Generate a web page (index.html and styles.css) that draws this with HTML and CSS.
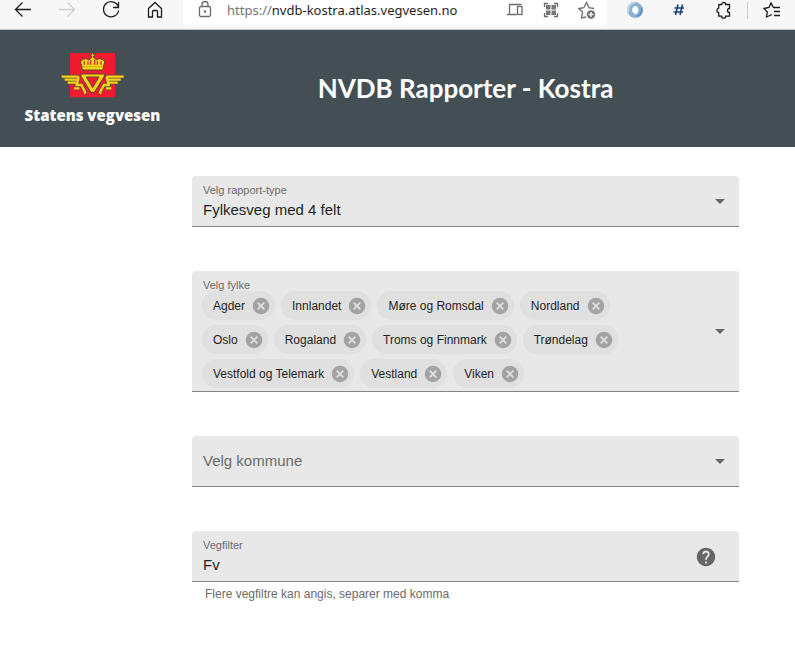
FILE: index.html
```html
<!DOCTYPE html>
<html lang="no">
<head>
<meta charset="utf-8">
<meta name="viewport" content="width=device-width, initial-scale=1">
<title>NVDB Rapporter - Kostra</title>
<link rel="stylesheet" href="styles.css">
</head>
<body>
<svg class="sprite" aria-hidden="true">
  <symbol id="remove" viewBox="0 0 18 18">
    <circle cx="9" cy="9" r="8.3" fill="#a3a3a3"/>
    <path d="M5.7 5.7l6.6 6.6M12.3 5.7l-6.6 6.6" stroke="#e0e0e0" stroke-width="1.8"/>
  </symbol>
</svg>

<div class="toolbar">
  <button class="tool" type="button" aria-label="Tilbake">
    <svg width="20" height="20" viewBox="0 0 20 20"><path d="M18 9.5H2.5M9.5 2.5l-7 7 7 7"/></svg>
  </button>
  <button class="tool faded" type="button" aria-label="Frem">
    <svg width="20" height="20" viewBox="0 0 20 20"><path d="M2 9.5h15.5M10.500 2.500l7 7-7 7"/></svg>
  </button>
  <button class="tool" type="button" aria-label="Oppdater">
    <svg width="20" height="20" viewBox="0 0 20 20"><path d="M17.500 7.500A7.600 7.600 0 1 0 17.600 10.500M17.500 2v5.500H12"/></svg>
  </button>
  <button class="tool" type="button" aria-label="Hjem">
    <svg width="20" height="20" viewBox="0 0 20 20"><path d="M3.500 8.500L10 2.500l6.500 6v8.500h-4v-5.500q0-1-1-1h-3q-1 0-1 1V17h-4z"/></svg>
  </button>
  <div class="address">
    <button class="tool grey" type="button" aria-label="Sikker tilkobling">
      <svg width="20" height="20" viewBox="0 0 20 20"><rect x="4.500" y="6.500" width="11" height="10" rx="1.500"/><path d="M7 6.500V4.500a3 3 0 0 1 6 0v2"/><circle cx="10" cy="11.500" r=".6"/></svg>
    </button>
    <label class="scheme" for="url">https://</label>
    <input class="url" id="url" type="text" value="nvdb-kostra.atlas.vegvesen.no">
    <button class="tool small grey" type="button" aria-label="Enheter">
      <svg width="20" height="20" viewBox="0 0 20 20"><path d="M16 5V4.500H4.500v9M2 14.500h9.500"/><rect x="12.500" y="6.500" width="4.500" height="8"/></svg>
    </button>
    <button class="tool small grey" type="button" aria-label="QR-kode">
      <svg width="20" height="20" viewBox="0 0 20 20"><path d="M3.500 7V3.500H7M13 3.500h3.500V7M16.500 13v3.500H13M7 16.500H3.500V13"/><path d="M5 5h4.500v4.500H5zM10.500 5H15v4.500h-4.500zM5 10.500h4.500V15H5zM10.500 10.500H15V15h-4.500z" fill="#777" stroke="none"/></svg>
    </button>
    <button class="tool small grey" type="button" aria-label="Legg til favoritt">
      <svg width="20" height="20" viewBox="0 0 20 20"><path d="M9 17l-4.500 1 1-6L1.800 8.500l5-.8L9.500 2.500l2.500 5.200 5 .8"/><circle cx="14" cy="14.500" r="4.200" fill="#6b6b6b" stroke="none"/><path d="M14 12v5M11.500 14.500h5" stroke="#fff"/></svg>
    </button>
  </div>
  <button class="tool" type="button" aria-label="Utvidelse">
    <svg width="20" height="20" viewBox="0 0 20 20"><circle cx="10" cy="10" r="5.400" stroke="#8db1d2" stroke-width="5"/><path d="M10 2.500a7.500 7.500 0 0 0-6.500 10" stroke="#bfd5e8" stroke-width="2"/><path d="M16.500 7.500a7 7 0 0 1-4.500 9" stroke="#5d8fbf" stroke-width="2"/><ellipse cx="10.500" cy="10" rx="2.700" ry="4" fill="#fff" stroke="none"/></svg>
  </button>
  <button class="tool" type="button" aria-label="Emneknagg">
    <svg width="20" height="20" viewBox="0 0 20 20"><path d="M9 4.500L6.500 15M13.500 4.500L11 15M5.500 8h9.500M4.500 12H14" stroke="#1c407c" stroke-width="1.600"/></svg>
  </button>
  <button class="tool" type="button" aria-label="Utvidelser">
    <svg width="20" height="20" viewBox="0 0 20 20"><path d="M6.500 4.500h2.200a2 2 0 0 1 4 0H16.500v4a2 2 0 1 0 0 4v3.700h-3.800a2 2 0 0 1-4 0H5.700v-3.500a2.300 2.300 0 0 1 0-4.500V5.300q0-.8.800-.8z" stroke-width="1.300"/></svg>
  </button>
  <span class="divider"></span>
  <button class="tool" type="button" aria-label="Favoritter">
    <svg width="20" height="20" viewBox="0 0 20 20"><path d="M10 14.500L4.500 17l.8-5L2 8.500l5-1L9 3l2.500 4.500H18M12 11.500h6M12 15.500h6" stroke-width="1.300"/></svg>
  </button>
</div>

<header class="banner">
  <div class="brand">
    <svg width="75" height="55" viewBox="0 0 225 165" role="img" aria-label="Riksvåpen">
      <defs>
        <path id="wing" d="M20 86h46q6 0 4 6l-5 19h14l11 20q2 4-3 5M29 95h38M38 104h26M57 121h16"/>
      </defs>
      <path fill="#ee1c2e" d="M45 15h135v133H45z"/>
      <g fill="none">
        <g stroke="#59492e" stroke-width="11">
          <use href="#wing"/>
          <use href="#wing" transform="matrix(-1 0 0 1 226 0)"/>
        </g>
        <g stroke="#f9d31c" stroke-width="7">
          <use href="#wing"/>
          <use href="#wing" transform="matrix(-1 0 0 1 226 0)"/>
        </g>
      </g>
      <g fill="#f9d31c" stroke="#59492e" stroke-width="3" stroke-linejoin="round">
        <path fill-rule="evenodd" d="M78 78h70v7l-30 48h-10L78 85zM94 87l19 32 19-32z"/>
        <path d="M82 66l-2-14q-8-13 5-18 10-5 17 2 3-6 8-7v-5h-4v-4h4v-5h6v5h4v4h-4v5q5 1 8 7 7-7 17-2 13 5 5 18l-2 14z"/>
      </g>
      <path d="M88 40v10M99 40v10M107 35v15M119 35v15M127 40v10M138 40v10" fill="none" stroke="#c6362a" stroke-width="4"/>
      <path d="M83 56h60" fill="none" stroke="#9b7427" stroke-width="2" stroke-dasharray="5 4"/>
    </svg>
    <span class="brand-name">Statens vegvesen</span>
  </div>
  <h1 class="title">NVDB Rapporter - Kostra</h1>
</header>

<main class="form">
  <div class="field">
    <label class="label" for="type">Velg rapport-type</label>
    <select class="control" id="type"><option>Fylkesveg med 4 felt</option></select>
    <span class="arrow"></span>
  </div>

  <div class="field" role="group" aria-labelledby="fylke">
    <span class="label" id="fylke">Velg fylke</span>
    <div class="chips">
      <span class="chip">Agder<button class="remove" type="button" aria-label="Fjern Agder"><svg width="18" height="18"><use href="#remove"/></svg></button></span>
      <span class="chip">Innlandet<button class="remove" type="button" aria-label="Fjern Innlandet"><svg width="18" height="18"><use href="#remove"/></svg></button></span>
      <span class="chip">Møre og Romsdal<button class="remove" type="button" aria-label="Fjern Møre og Romsdal"><svg width="18" height="18"><use href="#remove"/></svg></button></span>
      <span class="chip">Nordland<button class="remove" type="button" aria-label="Fjern Nordland"><svg width="18" height="18"><use href="#remove"/></svg></button></span>
      <span class="chip">Oslo<button class="remove" type="button" aria-label="Fjern Oslo"><svg width="18" height="18"><use href="#remove"/></svg></button></span>
      <span class="chip">Rogaland<button class="remove" type="button" aria-label="Fjern Rogaland"><svg width="18" height="18"><use href="#remove"/></svg></button></span>
      <span class="chip">Troms og Finnmark<button class="remove" type="button" aria-label="Fjern Troms og Finnmark"><svg width="18" height="18"><use href="#remove"/></svg></button></span>
      <span class="chip">Trøndelag<button class="remove" type="button" aria-label="Fjern Trøndelag"><svg width="18" height="18"><use href="#remove"/></svg></button></span>
      <span class="chip">Vestfold og Telemark<button class="remove" type="button" aria-label="Fjern Vestfold og Telemark"><svg width="18" height="18"><use href="#remove"/></svg></button></span>
      <span class="chip">Vestland<button class="remove" type="button" aria-label="Fjern Vestland"><svg width="18" height="18"><use href="#remove"/></svg></button></span>
      <span class="chip">Viken<button class="remove" type="button" aria-label="Fjern Viken"><svg width="18" height="18"><use href="#remove"/></svg></button></span>
    </div>
    <button class="arrow" type="button" aria-label="Åpne fylkeliste"></button>
  </div>

  <div class="field">
    <select class="control empty" aria-label="Velg kommune"><option>Velg kommune</option></select>
    <span class="arrow"></span>
  </div>

  <div class="entry">
    <div class="field">
      <label class="label" for="filter">Vegfilter</label>
      <input class="control" id="filter" type="text" value="Fv" aria-describedby="hint">
      <button class="help" type="button" aria-label="Hjelp">
        <svg width="22" height="22" viewBox="0 0 24 24"><path fill="#666" d="M12 2C6.480 2 2 6.480 2 12s4.480 10 10 10 10-4.480 10-10S17.520 2 12 2zm1 17h-2v-2h2v2zm2.070-7.750l-.9.920C13.450 12.900 13 13.500 13 15h-2v-.5c0-1.100.450-2.100 1.170-2.830l1.240-1.260c.370-.360.590-.860.590-1.410 0-1.100-.9-2-2-2s-2 .9-2 2H8c0-2.210 1.790-4 4-4s4 1.790 4 4c0 .880-.360 1.680-.930 2.250z"/></svg>
      </button>
    </div>
    <p class="hint" id="hint">Flere vegfiltre kan angis, separer med komma</p>
  </div>
</main>
</body>
</html>
```
FILE: styles.css
```css
* {
  box-sizing: border-box;
}

body {
  margin: 0;
  background: #fff;
  color: #1f1f1f;
  font-family: "Liberation Sans", Arial, sans-serif;
}

button,
input,
select {
  margin: 0;
  padding: 0;
  border: 0;
  background: none;
  color: inherit;
  font: inherit;
}

.sprite {
  display: none;
}

/* Browser toolbar */
.toolbar {
  display: flex;
  height: 30px;
  padding: 0 1px;
  border-bottom: 1px solid #c4c7c9;
  background: #f7f7f7;
}

.tool {
  display: flex;
  flex: 0 0 44px;
  justify-content: center;
  height: 20px;
  color: #1b1b1b;
}

.tool svg {
  fill: none;
  stroke: currentColor;
  stroke-width: 1.3;
}

.tool.small {
  flex-basis: 36px;
}

.tool.faded {
  color: #cfcfcf;
}

.tool.grey {
  color: #6b6b6b;
}

.address {
  display: flex;
  flex: 1;
  height: 25px;
  margin: 0 6px;
  padding-right: 2px;
  border-radius: 0 0 4px 4px;
  background: #fff;
  font: 13px/20px "Noto Sans", "Open Sans", sans-serif;
}

.scheme {
  color: #757575;
}

.url {
  flex: 1;
  min-width: 0;
  height: 20px;
}

.divider {
  flex: 0 0 1px;
  height: 17px;
  margin: 2px 2px 0;
  background: #cfcfcf;
}

/* Banner */
.banner {
  display: grid;
  grid-template-columns: 192px 1fr 56px;
  align-items: center;
  padding: 18px 0 20px;
  background: #444f55;
  color: #fff;
}

.brand {
  display: flex;
  flex-direction: column;
  align-items: center;
  padding-right: 7px;
}

.brand-name {
  font: 800 15px/24px "Open Sans", "Noto Sans", sans-serif;
}

.title {
  margin: 0;
  font: 700 26px/36px Lato, "Noto Sans", sans-serif;
  text-align: center;
}

/* Report form */
.form {
  display: flex;
  flex-direction: column;
  gap: 44px;
  padding: 29px 56px 40px 192px;
}

.field {
  position: relative;
  min-height: 51px;
  border-bottom: 1px solid #858585;
  border-radius: 4px 4px 0 0;
  background: #e8e8e8;
}

.label {
  position: absolute;
  top: 8px;
  left: 11px;
  color: #6b6b6b;
  font-size: 11px;
  line-height: 12px;
}

.control {
  display: block;
  width: 100%;
  height: 50px;
  padding: 16px 60px 0 11px;
  appearance: none;
  font-size: 15px;
}

.control.empty {
  padding-top: 0;
  padding-bottom: 2px;
  color: #6b6b6b;
}

.arrow {
  position: absolute;
  top: calc(50% - 2px);
  right: 14px;
  border: 5px solid transparent;
  border-top-color: #666;
  border-bottom-width: 0;
  pointer-events: none;
}

.chips {
  display: flex;
  flex-wrap: wrap;
  gap: 5px 6px;
  padding: 20px 110px 3px 10px;
}

.chip {
  display: flex;
  align-items: center;
  gap: 7px;
  height: 29px;
  padding: 0 5px 0 11px;
  border-radius: 15px;
  background: #e0e0e0;
  font-size: 12px;
  white-space: nowrap;
}

.remove {
  display: flex;
}

.help {
  position: absolute;
  top: 15px;
  right: 22px;
  display: flex;
}

.hint {
  margin: 0;
  padding: 5px 13px;
  color: #6b6b6b;
  font-size: 12px;
  line-height: 14px;
}
```
